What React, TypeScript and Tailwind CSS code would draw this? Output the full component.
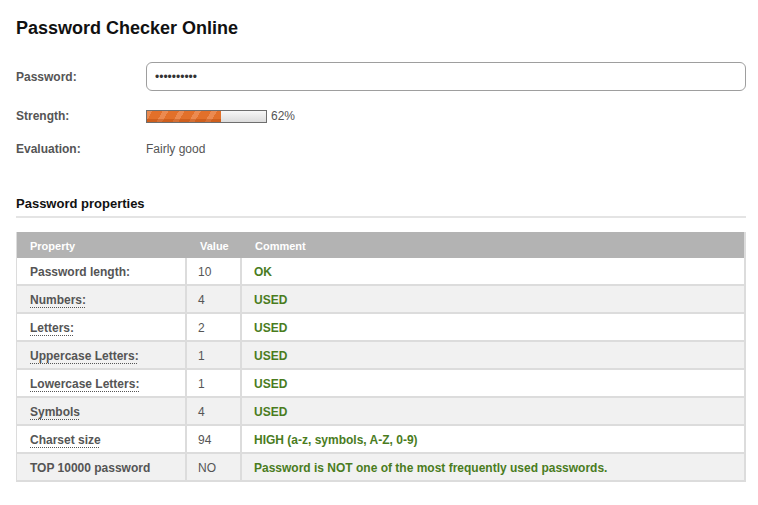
const rows = [
  { label: "Password length:", dotted: false, value: "10", comment: "OK" },
  { label: "Numbers:", dotted: true, value: "4", comment: "USED" },
  { label: "Letters:", dotted: true, value: "2", comment: "USED" },
  { label: "Uppercase Letters:", dotted: true, value: "1", comment: "USED" },
  { label: "Lowercase Letters:", dotted: true, value: "1", comment: "USED" },
  { label: "Symbols", dotted: true, value: "4", comment: "USED" },
  { label: "Charset size", dotted: true, value: "94", comment: "HIGH (a-z, symbols, A-Z, 0-9)" },
  { label: "TOP 10000 password", dotted: false, value: "NO", comment: "Password is NOT one of the most frequently used passwords." },
];

const strength = 62;

export default function App() {
  return (
    <div className="min-h-[505px] w-[758px] bg-white px-4 pt-[17px] font-['Liberation_Sans',Arial,sans-serif] text-[12px] text-[#555]">
      <h1 className="text-[18px] font-bold leading-[22px] text-[#111]">Password Checker Online</h1>

      <div className="mt-[23px] w-[730px]">
        <div className="flex h-[29px] items-center">
          <span className="w-[130px] font-bold">Password:</span>
          <input
            type="password"
            readOnly
            defaultValue="aB3$x9!k2#"
            className="h-[29px] w-[600px] rounded-[6px] border border-[#9e9e9e] bg-white pl-2 text-[12px] text-[#333] outline-none"
          />
        </div>

        <div className="mt-[15px] flex h-[20px] items-center">
          <span className="w-[130px] font-bold">Strength:</span>
          <div className="h-[13px] w-[121px] border border-[#6e6e6e] bg-[linear-gradient(#f7f7f7,#dcdcdc)]">
            <div
              className="h-full bg-[#dd6518] bg-[image:repeating-linear-gradient(-60deg,#e2702a_0_9px,#eb8a50_9px_14px)] shadow-[inset_0_-3px_0_rgba(180,70,10,0.4)]"
              style={{ width: `${strength}%` }}
            />
          </div>
          <span className="ml-[4px]">{strength}%</span>
        </div>

        <div className="mt-[13px] flex h-[20px] items-center">
          <span className="w-[130px] font-bold">Evaluation:</span>
          <span>Fairly good</span>
        </div>

        <h2 className="mt-[36px] border-b-2 border-[#e4e4e4] pb-[3px] text-[13px] font-bold leading-[18px] text-[#111]">
          Password properties
        </h2>

        <div className="mt-[14px] border-r-2 border-l border-[#dcdcdc]">
          <div className="grid h-[26px] grid-cols-[170px_55px_1fr] items-center bg-[#b3b3b3] pt-[2px] text-[11px] font-bold text-white">
            <span className="pl-[13px]">Property</span>
            <span className="pl-[13px]">Value</span>
            <span className="pl-[13px]">Comment</span>
          </div>
          {rows.map((r, i) => (
            <div
              key={r.label}
              className={`grid h-[28px] grid-cols-[170px_55px_1fr] border-b-2 border-[#dcdcdc] ${i % 2 === 0 ? "bg-white" : "bg-[#f1f1f1]"}`}
            >
              <div className="flex items-center border-r-2 border-[#dcdcdc] pl-[13px] pt-[2px] font-bold">
                <span className={r.dotted ? "underline decoration-dotted decoration-1 underline-offset-[3px]" : ""}>
                  {r.label}
                </span>
              </div>
              <div className="flex items-center border-r-2 border-[#dcdcdc] pl-[11px] pt-[2px]">{r.value}</div>
              <div className="flex items-center pl-[12px] pt-[2px] font-bold text-[#4a7c1e]">{r.comment}</div>
            </div>
          ))}
        </div>
      </div>
    </div>
  );
}
